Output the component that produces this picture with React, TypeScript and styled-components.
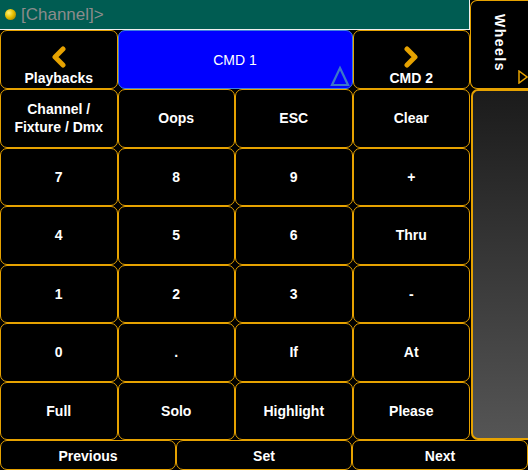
import React from "react";
import styled, { createGlobalStyle } from "styled-components";

const ORANGE = "#e6a200";

const Global = createGlobalStyle`
  html, body { margin: 0; padding: 0; background: #000; }
  body { font-family: "Liberation Sans", Arial, sans-serif; }
  * { box-sizing: border-box; }
`;

const Screen = styled.div`
  width: 528px;
  height: 470px;
  background: #000;
  display: grid;
  grid-template-columns: 470px 58px;
  grid-template-rows: 440px 30px;
  overflow: hidden;
`;

const LeftCol = styled.div`
  display: flex;
  flex-direction: column;
`;

const Header = styled.div`
  height: 30px;
  background: #005c52;
  border-bottom: 1px solid #f0f0f0;
  border-right: 1px solid #f0f0f0;
  display: flex;
  align-items: center;
  gap: 5px;
  padding-left: 5px;
`;

const Ball = styled.span`
  width: 11px;
  height: 11px;
  border-radius: 50%;
  background: radial-gradient(circle at 35% 35%, #fff27a 0%, #e6c000 45%, #8a6a00 100%);
`;

const Prompt = styled.span`
  color: #8c8c8c;
  font-size: 17px;
`;

const Keypad = styled.div`
  flex: 1;
  display: grid;
  grid-template-columns: repeat(4, 1fr);
  grid-template-rows: 59px repeat(6, 1fr);
`;

const Key = styled.button<{ $blue?: boolean }>`
  position: relative;
  margin: 0;
  padding: 0;
  background: ${(p) => (p.$blue ? "#0000ff" : "#000")};
  border: 1px solid ${(p) => (p.$blue ? "#3f7ee0" : ORANGE)};
  border-radius: 7px;
  color: #fff;
  font-family: "Liberation Sans", Arial, sans-serif;
  font-size: 14px;
  font-weight: ${(p) => (p.$blue ? 400 : 700)};
  line-height: 18px;
  display: flex;
  flex-direction: column;
  align-items: center;
  justify-content: center;
  text-align: center;
`;

const NavKey = styled(Key)`
  justify-content: flex-end;
  padding-bottom: 1px;
  gap: 1px;
`;

const Corner = styled.svg`
  position: absolute;
  right: 1px;
  bottom: 1px;
`;

const RightCol = styled.div`
  display: grid;
  grid-template-rows: 89px 1fr;
`;

const WheelsKey = styled.div`
  position: relative;
  border: 1px solid ${ORANGE};
  border-radius: 7px 0 0 7px;
  border-right: none;
  display: flex;
  align-items: center;
  justify-content: center;
  padding-bottom: 2px;
`;

const VerticalLabel = styled.span`
  writing-mode: vertical-rl;
  color: #fff;
  font-weight: 700;
  font-size: 14px;
  letter-spacing: 1.5px;
  line-height: 16px;
`;

const Arrow = styled.svg`
  position: absolute;
  right: 0;
  top: 69px;
`;

const Wheel = styled.div`
  margin-left: 1px;
  border: 2px solid ${ORANGE};
  border-right: none;
  border-radius: 7px 0 0 7px;
  background: linear-gradient(#1b1b1b, #555);
`;

const BottomBar = styled.div`
  grid-column: 1 / span 2;
  display: grid;
  grid-template-columns: 176px 176px 176px;
`;

const BarKey = styled(Key)`
  padding-top: 2px;
`;

const Chevron = ({ dir }: { dir: "left" | "right" }) => (
  <svg width="16" height="22" viewBox="0 0 16 22">
    <path
      d={dir === "left" ? "M12 3 L4 11 L12 19" : "M4 3 L12 11 L4 19"}
      fill="none"
      stroke={ORANGE}
      strokeWidth="5"
      strokeLinecap="round"
      strokeLinejoin="round"
    />
  </svg>
);

const rows: string[][] = [
  ["7", "8", "9", "+"],
  ["4", "5", "6", "Thru"],
  ["1", "2", "3", "-"],
  ["0", ".", "If", "At"],
  ["Full", "Solo", "Highlight", "Please"],
];

export default function App() {
  return (
    <>
      <Global />
      <Screen>
        <LeftCol>
          <Header>
            <Ball />
            <Prompt>[Channel]&gt;</Prompt>
          </Header>
          <Keypad>
            <NavKey>
              <Chevron dir="left" />
              <span>Playbacks</span>
            </NavKey>
            <Key $blue style={{ gridColumn: "span 2" }}>
              CMD 1
              <Corner width="22" height="22" viewBox="0 0 22 22">
                <path d="M11 3 L19 20 L3 20 Z" fill="none" stroke="#3b78c8" strokeWidth="2.2" />
              </Corner>
            </Key>
            <NavKey>
              <Chevron dir="right" />
              <span>CMD 2</span>
            </NavKey>
            <Key>
              Channel /<br />
              Fixture / Dmx
            </Key>
            <Key>Oops</Key>
            <Key>ESC</Key>
            <Key>Clear</Key>
            {rows.flat().map((t, i) => (
              <Key key={i}>{t}</Key>
            ))}
          </Keypad>
        </LeftCol>
        <RightCol>
          <WheelsKey>
            <VerticalLabel>Wheels</VerticalLabel>
            <Arrow width="10" height="14" viewBox="0 0 10 14">
              <path d="M1 1 L9 7 L1 13 Z" fill="none" stroke={ORANGE} strokeWidth="1.5" />
            </Arrow>
          </WheelsKey>
          <Wheel />
        </RightCol>
        <BottomBar>
          <BarKey>Previous</BarKey>
          <BarKey>Set</BarKey>
          <BarKey>Next</BarKey>
        </BottomBar>
      </Screen>
    </>
  );
}
